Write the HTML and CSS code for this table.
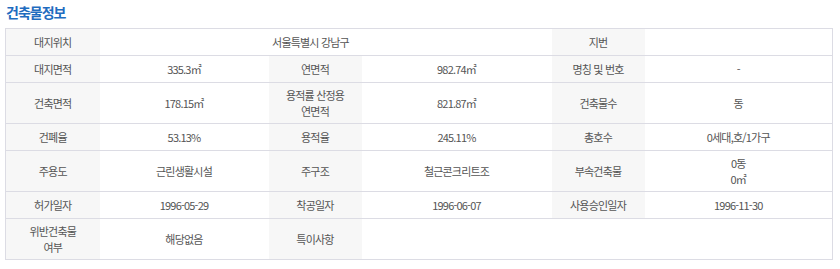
FILE: index.html
```html
<!DOCTYPE html>
<html lang="ko">
<head>
<meta charset="utf-8">
<title>건축물정보</title>
<link rel="stylesheet" href="styles.css">
</head>
<body>
<section class="panel">
  <h2 class="title">건축물정보</h2>
  <table class="info">
    <colgroup>
      <col class="c1"><col class="c2"><col class="c3"><col class="c4"><col class="c5"><col class="c6">
    </colgroup>
    <tbody>
      <tr class="r-sm">
        <th>대지위치</th>
        <td colspan="3" class="addr">서울특별시 강남구</td>
        <th>지번</th>
        <td></td>
      </tr>
      <tr class="r-sm">
        <th>대지면적</th>
        <td>335.3㎡</td>
        <th>연면적</th>
        <td>982.74㎡</td>
        <th>명칭 및 번호</th>
        <td>-</td>
      </tr>
      <tr class="r-lg">
        <th>건축면적</th>
        <td>178.15㎡</td>
        <th>용적률 산정용<br>연면적</th>
        <td>821.87㎡</td>
        <th>건축물수</th>
        <td>동</td>
      </tr>
      <tr class="r-sm">
        <th>건폐율</th>
        <td>53.13%</td>
        <th>용적율</th>
        <td>245.11%</td>
        <th>총호수</th>
        <td>0세대,호/1가구</td>
      </tr>
      <tr class="r-lg">
        <th>주용도</th>
        <td>근린생활시설</td>
        <th>주구조</th>
        <td>철근콘크리트조</td>
        <th>부속건축물</th>
        <td>0동<br>0㎡</td>
      </tr>
      <tr class="r-sm">
        <th>허가일자</th>
        <td>1996-05-29</td>
        <th>착공일자</th>
        <td>1996-06-07</td>
        <th>사용승인일자</th>
        <td>1996-11-30</td>
      </tr>
      <tr class="r-lg">
        <th>위반건축물<br>여부</th>
        <td>해당없음</td>
        <th>특이사항</th>
        <td colspan="3"></td>
      </tr>
    </tbody>
  </table>
</section>
</body>
</html>
```

FILE: styles.css
```css
html, body {
  margin: 0;
  padding: 0;
  background: #ffffff;
}

body {
  font-family: "Noto Sans CJK KR", "Noto Sans", sans-serif;
  color: #555555;
}

.panel {
  padding: 3px 8px 0 5px;
}

.title {
  margin: 0 0 6px 1px;
  font-size: 14px;
  line-height: 19px;
  font-weight: 700;
  letter-spacing: -1px;
  color: #1f6cbf;
}

.info {
  width: 827px;
  border-collapse: collapse;
  table-layout: fixed;
  border: 1px solid #dcdce4;
  font-size: 11px;
  letter-spacing: -0.8px;
  line-height: 16px;
}

.c1 { width: 94px; }
.c2 { width: 169px; }
.c3 { width: 93px; }
.c4 { width: 190px; }
.c5 { width: 93px; }
.c6 { width: 188px; }

.info th,
.info td {
  border-top: 1px solid #dcdce4;
  border-bottom: 1px solid #dcdce4;
  text-align: center;
  vertical-align: middle;
  padding: 0;
  font-weight: 400;
  color: #555555;
}

.info th {
  background: #f7f7f7;
}

.info td.addr {
  padding-right: 30px;
}

.r-sm { height: 27px; }
.r-lg { height: 41px; }
```
